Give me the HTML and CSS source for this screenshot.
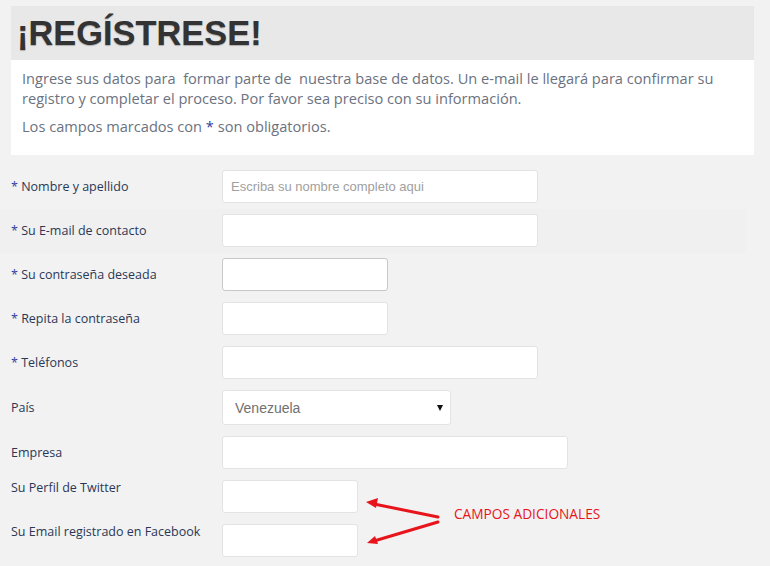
FILE: index.html
```html
<!DOCTYPE html>
<html lang="es">
<head>
  <meta charset="UTF-8">
  <title>Regístrese</title>
  <meta name="viewport" content="width=device-width, initial-scale=1.0">
  <link rel="stylesheet" href="styles.css">
</head>
<body>
  <!-- Intro box -->
  <div class="intro">
    <h1 class="intro-title">¡REGÍSTRESE!</h1>
    <div class="intro-body">
      <p>Ingrese sus datos para &nbsp;formar parte de &nbsp;nuestra base de datos. Un e-mail le llegará para confirmar su registro y completar el proceso. Por favor sea preciso con su información.</p>
      <p>Los campos marcados con <span class="req">*</span> son obligatorios.</p>
    </div>
  </div>

  <!-- Registration form -->
  <form class="reg-form">
    <div class="row">
      <label><span class="req">*</span> Nombre y apellido</label>
      <input type="text" class="w-lg" placeholder="Escriba su nombre completo aqui">
    </div>
    <div class="row row-alt">
      <label><span class="req">*</span> Su E-mail de contacto</label>
      <input type="text" class="w-lg">
    </div>
    <div class="row">
      <label><span class="req">*</span> Su contraseña deseada</label>
      <input type="password" class="w-sm focus">
    </div>
    <div class="row">
      <label><span class="req">*</span> Repita la contraseña</label>
      <input type="password" class="w-sm">
    </div>
    <div class="row">
      <label><span class="req">*</span> Teléfonos</label>
      <input type="text" class="w-lg">
    </div>
    <div class="row">
      <label>País</label>
      <span class="select-wrap">
        <select>
          <option>Venezuela</option>
        </select>
      </span>
    </div>
    <div class="row">
      <label>Empresa</label>
      <input type="text" class="w-xl">
    </div>
    <div class="row row-top">
      <label>Su Perfil de Twitter</label>
      <input type="text" class="w-xs">
    </div>
    <div class="row row-top">
      <label>Su Email registrado en Facebook</label>
      <input type="text" class="w-xs">
    </div>

    <!-- annotation -->
    <div class="note">
      <svg class="note-arrows" width="80" height="50" viewBox="0 0 80 50">
        <g stroke="#e8141b" stroke-width="3" fill="none" stroke-linecap="round">
          <line x1="76" y1="23" x2="12" y2="10"/>
          <line x1="76" y1="28" x2="12" y2="47"/>
        </g>
        <g fill="#e8141b">
          <polygon points="4,8 16,4 14,14"/>
          <polygon points="5,49 13,42 16,50"/>
        </g>
      </svg>
      <span class="note-text">CAMPOS ADICIONALES</span>
    </div>
  </form>
</body>
</html>
```

FILE: styles.css
```css
/* ===== Base ===== */
* {
  margin: 0;
  padding: 0;
  box-sizing: border-box;
}
body {
  background: #f2f2f2;
  font-family: "Open Sans", Arial, sans-serif;
  padding-top: 6px;
}

/* ===== Intro box ===== */
.intro {
  margin-left: 11px;
  width: 743px;
}
.intro-title {
  background: #e8e8e8;
  height: 54px;
  padding: 7px 0 0 6px;
  font-family: "Liberation Sans", Arial, sans-serif;
  font-size: 34.4px;
  font-weight: bold;
  line-height: 40px;
  color: #333;
  text-shadow: 0 1px 1px rgba(0,0,0,0.25);
}
.intro-body {
  background: #fff;
  height: 95px;
  padding: 8px 11px 0 11px;
  color: #6b7280;
  font-size: 14.6px;
  line-height: 20px;
}
.intro-body p {
  margin-bottom: 8px;
}
.req {
  color: #2e3ea0;
}

/* ===== Form ===== */
.reg-form {
  position: relative;
  margin-top: 10px;
}
.row {
  display: flex;
  align-items: center;
  padding: 5px 0 6px 11px;
}
.row-alt {
  background: #f0f0f0;
  width: 746px;
}
.row-top {
  align-items: flex-start;
}
.row-top label {
  margin-top: -1px;
}
.row label {
  width: 211px;
  color: #2a3856;
  font-size: 12.5px;
  line-height: 18px;
}
.row input {
  height: 33px;
  background: #fff;
  border: 1px solid #e3e3e3;
  border-radius: 3px;
  padding: 0 8px;
  font-family: "Liberation Sans", Arial, sans-serif;
  font-size: 13px;
  color: #555;
  outline: none;
}
.row input::placeholder {
  color: #a0a0a0;
}
.row input.focus {
  border-color: #c8c8c8;
}
.w-lg { width: 316px; }
.w-sm { width: 166px; }
.w-xl { width: 346px; }
.w-xs { width: 136px; }

/* ===== Select ===== */
.select-wrap {
  position: relative;
  display: inline-block;
}
.select-wrap select {
  appearance: none;
  -webkit-appearance: none;
  width: 229px;
  height: 35px;
  background: #fff;
  border: 1px solid #e3e3e3;
  border-radius: 3px;
  padding: 0 12px;
  font-family: "Liberation Sans", Arial, sans-serif;
  font-size: 14px;
  color: #707070;
  outline: none;
}
.select-wrap::after {
  content: "";
  position: absolute;
  right: 8px;
  top: 15px;
  border-left: 3.5px solid transparent;
  border-right: 3.5px solid transparent;
  border-top: 6px solid #111;
  pointer-events: none;
}

/* ===== Annotation ===== */
.note {
  position: absolute;
  left: 362px;
  top: 329px;
  display: flex;
  align-items: center;
}
.note-arrows {
  display: block;
}
.note-text {
  margin-left: 12px;
  margin-top: -12px;
  color: #e8141b;
  font-size: 13.7px;
}
```
